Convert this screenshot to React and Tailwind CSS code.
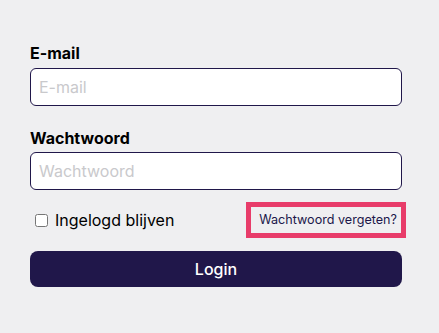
import React from 'react';

export default function App() {
  return (
    <div className="min-h-[333px] w-full bg-[#efeff1] pl-[30px] pr-[37px] pt-[41px] font-['Inter',sans-serif] text-black">
      <form className="flex flex-col" onSubmit={(e) => e.preventDefault()}>
        <label className="mb-[3px] text-base leading-6 font-bold">E-mail</label>
        <input
          type="email"
          placeholder="E-mail"
          className="h-[38px] rounded-md border border-[#20174a] bg-white px-2 text-base text-black placeholder:text-[#c9c9cc] outline-none"
        />

        <label className="mt-5 mb-[2px] text-base leading-6 font-bold">Wachtwoord</label>
        <input
          type="password"
          placeholder="Wachtwoord"
          className="h-[38px] rounded-md border border-[#20174a] bg-white px-2 text-base text-black placeholder:text-[#c9c9cc] outline-none"
        />

        <div className="mt-3 flex h-[36px] items-center justify-between">
          <label className="flex items-center gap-[7px] pl-[5px] text-base">
            <input type="checkbox" className="m-0 h-[13px] w-[13px]" />
            <span>Ingelogd blijven</span>
          </label>
          <a href="#" className="-mr-[4px] flex h-[36px] items-center border-[5px] border-[#e83c6a] pl-[8px] pr-[4px] text-[12.6px] text-[#20174a]">
            Wachtwoord vergeten?
          </a>
        </div>

        <button
          type="submit"
          className="mt-[13px] h-[36px] rounded-lg bg-[#20174a] text-base font-medium text-white"
        >
          Login
        </button>
      </form>
    </div>
  );
}
